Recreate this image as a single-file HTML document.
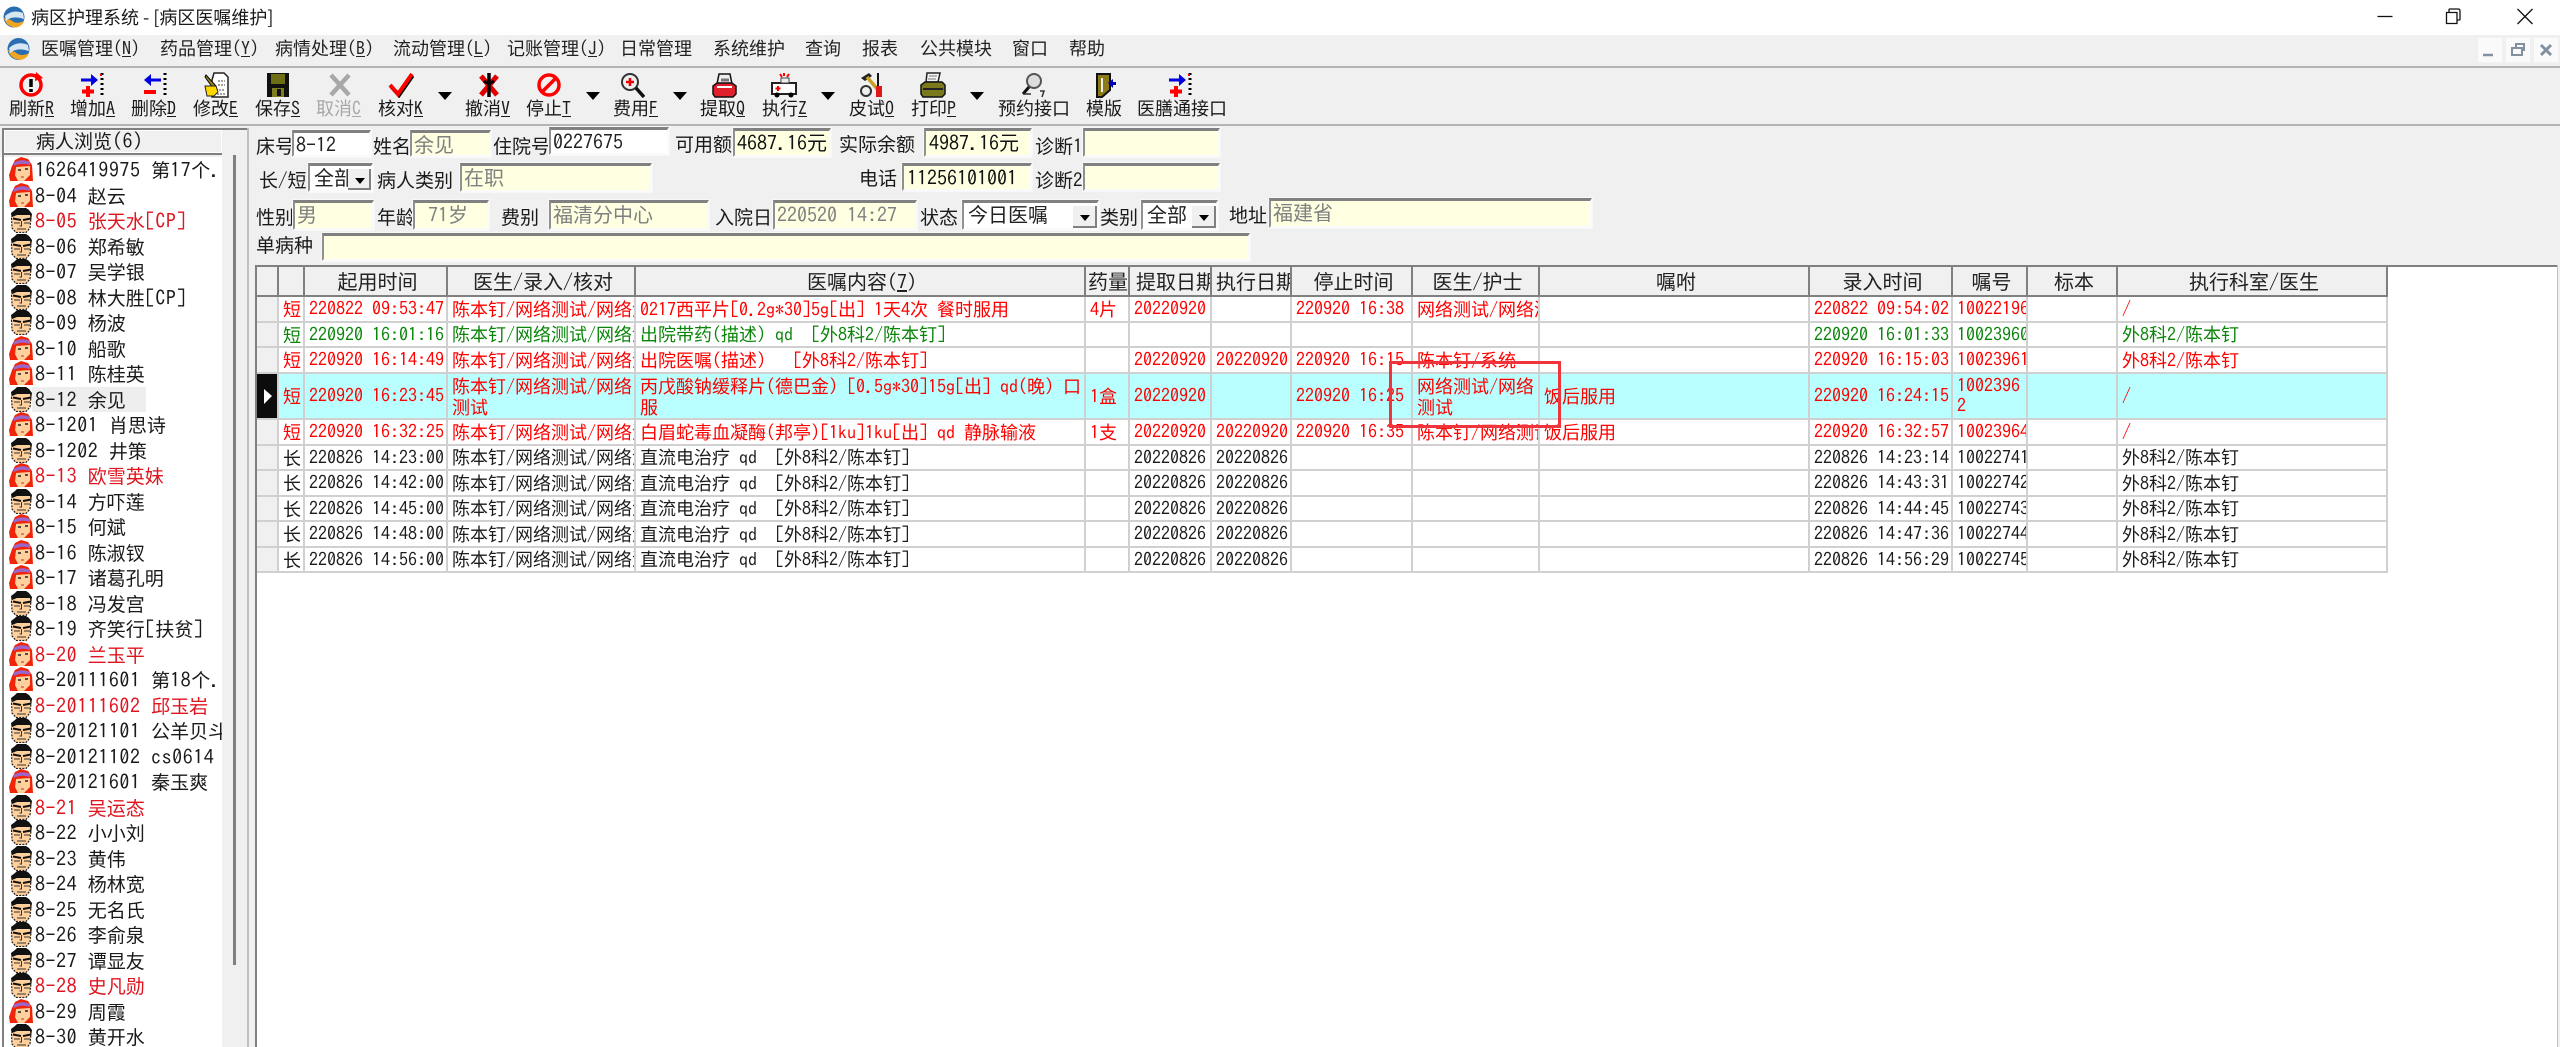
<!DOCTYPE html>
<html lang="zh-CN"><head><meta charset="utf-8"><title>病区护理系统</title>
<style>
html,body{margin:0;padding:0;width:2560px;height:1047px;overflow:hidden;background:#f0f0f0}
body{position:relative;font:18px/24px "WenQuanYi Zen Hei","Noto Sans CJK SC",sans-serif;color:#1a1a1a;filter:blur(.3px)}
b,u,.d{font-family:IPAGothic,"Liberation Mono",monospace;font-weight:normal}
.a{position:absolute;white-space:nowrap}
.t{position:absolute;white-space:nowrap;height:24px;line-height:24px;font-size:19px}
.t b{font-size:19px}
.in{position:absolute;box-sizing:border-box;background:#ffffe1;border-top:3px solid #808080;border-left:2px solid #909090;border-right:2px solid #fafafa;border-bottom:2px solid #fafafa;color:#808080;font-size:20px;line-height:22px;padding-left:2px;white-space:nowrap;overflow:hidden;outline:1px solid #f8f8f8}
.wh{background:#fff;color:#222}.bk{color:#111}
.btn{position:absolute;top:3px;bottom:0;right:0;background:#f0f0f0;border-right:2px solid #808080;border-bottom:2px solid #808080;box-sizing:border-box}
.btn:after{content:"";position:absolute;left:7px;top:9px;border:5px solid transparent;border-top:6px solid #000;border-bottom:0}
.lb{position:absolute;top:96px;height:24px;line-height:24px;white-space:nowrap}
.lb u{text-underline-offset:1px}
.ic{position:absolute;top:72px;width:26px;height:26px}
.ar{position:absolute;top:92px;border:7px solid transparent;border-top:8px solid #000;border-bottom:0}
.m{position:absolute;top:36px;height:24px;line-height:24px;white-space:nowrap;color:#222}
.ln{position:absolute;background:#b4b4b4}
#list{position:absolute;left:0;top:157px;width:222px;height:890px;overflow:hidden;background:#fff;font-size:19px}
#list div{position:relative;height:25.5px;line-height:25.5px;white-space:nowrap;padding-left:35px;color:#1a1a1a}
#list svg{position:absolute;left:9px;top:0;width:24px;height:25px}
#list b{font-size:20px;letter-spacing:.55px}
#list .red{color:#e0141e}
#list .sel:before{content:"";position:absolute;left:32px;top:0;width:114px;height:25.5px;background:#eee;z-index:0}
#list .sel span{position:relative}
table{position:absolute;left:257px;top:267px;border-collapse:separate;border-spacing:0;table-layout:fixed;width:2131px;background:#fff}
td,th{box-sizing:border-box;padding:0 0 0 4px;overflow:hidden;white-space:nowrap;border-right:2px solid #d0d0d0;border-bottom:2px solid #d0d0d0;line-height:20px;font-weight:normal;font-size:18px}
th{height:30px;background:#f0f0f0;font-size:20px;border-right-color:#808080;border-bottom-color:#808080;color:#222}
th.c{text-align:left;padding-left:6px}
tr.x td{height:26px}tr.y td{height:25px}
tr.r td{color:#f00}tr.g td{color:#0a850a}tr.k td{color:#1c1c1c}
tr.s td{height:46px;background:#b9ffff;white-space:normal;word-break:break-all}
td.i{background:#f0f0f0!important;padding:0}
tr.s td.i{background:#0c0c0c!important;position:relative}
</style></head><body>
<svg width="0" height="0" style="position:absolute"><defs>
<symbol id="man" viewBox="0 0 24 25">
<path d="M3 13 L2 5 L6 2 L8 0 L17 0 L20 2 L23 6 L22 13Z" fill="#111"/>
<path d="M3 9 L8 7 L21 7 L22 13 L21 20 L17 24.500 L7 24.500 L3 20Z" fill="#ffcf9c"/>
<path d="M2.500 10 L3 20 L7 24.500 L17 24.500 L21 20 L22 10" fill="none" stroke="#222" stroke-width="1.200" stroke-dasharray="2 1.200"/>
<path d="M4 10.500l8 1.500M14 12l8-1.500" stroke="#111" stroke-width="2"/>
<path d="M5 15h6M15 15h6M12.500 13v5h-2M8 21h9" stroke="#333" stroke-width="1" fill="none"/>
</symbol>
<symbol id="girl" viewBox="0 0 24 25">
<path d="M1 24 L0 18 L3 9 L6 3 L12 0 L19 2 L23 8 L24 24 L19 24 L5 24Z" fill="#f02408"/>
<path d="M4.500 6 Q12 1 21 5 L21 8 Q12 5 5 9Z" fill="#9a66cc"/>
<path d="M7 10 L21 9 L21 18 L15 24 L9 24 L6 18Z" fill="#ffcf9c"/>
<path d="M9 13h3M16 12h3" stroke="#222" stroke-width="1.600"/><path d="M12 20h3" stroke="#b33" stroke-width="1"/>
<path d="M3 10 L7 9 L6 18 L3 23 Z" fill="#f02408"/>
</symbol>
<symbol id="add" viewBox="0 0 26 26">
<path d="M1 8h12" stroke="#0000e0" stroke-width="3"/><path d="M11 2l7 6-7 6z" fill="#0000e0"/>
<path d="M22 1v2M22 6v2M22 11v2M22 16v2M22 21v2" stroke="#000" stroke-width="3"/><path d="M20 3h2" stroke="#f00" stroke-width="2"/>
<path d="M8 14v11M2 19.500h12" stroke="#f00" stroke-width="4"/>
</symbol>
</defs></svg>

<!-- title bar -->
<div class="a" style="left:0;top:0;width:2560px;height:35px;background:#fff"></div>
<svg class="a" style="left:3px;top:6px" width="22" height="22" viewBox="0 0 22 22"><circle cx="11" cy="11" r="10.500" fill="#2a6db0"/><path d="M1 12 Q3 20 12 21.500 Q19 21 21 15 Q13 19 8 14Z" fill="#f2a51e"/><path d="M3 15 Q9 9 21 13 L20 7 Q10 3 2 10Z" fill="#d8e6f2"/></svg>
<div class="t" style="left:31px;top:5px;font-family:'Noto Sans CJK SC',sans-serif;font-size:18px">病区护理系统 - [病区医嘱维护]</div>
<svg class="a" style="left:2370px;top:5px" width="175" height="24" viewBox="0 0 175 24" fill="none" stroke="#111" stroke-width="1.300"><path d="M7.500 11.500h15"/><path d="M76.500 7.500h10.500v11h-10.500z"/><path d="M79 7.500v-2.500q0-1 1-1h8q2 0 2 2v8q0 1-1 1h-2"/><path d="M147.500 4l15 15M162.500 4l-15 15"/></svg>

<!-- menu bar -->
<svg class="a" style="left:7px;top:37px" width="23" height="24" viewBox="0 0 22 22"><circle cx="11" cy="11" r="10.500" fill="#2a6db0"/><path d="M1 12 Q3 20 12 21.500 Q19 21 21 15 Q13 19 8 14Z" fill="#f2a51e"/><path d="M3 15 Q9 9 21 13 L20 7 Q10 3 2 10Z" fill="#d8e6f2"/></svg>
<div class="m" style="left:41px">医嘱管理<b>(<u>N</u>)</b></div>
<div class="m" style="left:160px">药品管理<b>(<u>Y</u>)</b></div>
<div class="m" style="left:275px">病情处理<b>(<u>B</u>)</b></div>
<div class="m" style="left:393px">流动管理<b>(<u>L</u>)</b></div>
<div class="m" style="left:507px">记账管理<b>(<u>J</u>)</b></div>
<div class="m" style="left:620px">日常管理</div>
<div class="m" style="left:713px">系统维护</div>
<div class="m" style="left:805px">查询</div>
<div class="m" style="left:862px">报表</div>
<div class="m" style="left:920px">公共模块</div>
<div class="m" style="left:1012px">窗口</div>
<div class="m" style="left:1069px">帮助</div>
<div class="a" style="left:2478px;top:38px;width:24px;height:24px;background:#fafafa"></div>
<div class="a" style="left:2506px;top:38px;width:24px;height:24px;background:#fafafa"></div>
<div class="a" style="left:2534px;top:38px;width:24px;height:24px;background:#fafafa"></div>
<svg class="a" style="left:2478px;top:38px" width="80" height="24" viewBox="0 0 80 24" fill="none" stroke="#8290a0" stroke-width="2.500"><path d="M5 17h10"/><path d="M34 10h10v7h-10z M38 10v-4h8v7" stroke-width="2"/><path d="M63 7l10 10M73 7l-10 10" stroke-width="3"/></svg>
<div class="ln" style="left:0;top:66px;width:2560px;height:2px"></div>

<!-- toolbar icons -->
<svg class="ic" style="left:18px" viewBox="0 0 26 26"><circle cx="13" cy="13" r="10" fill="none" stroke="#f00" stroke-width="3.500"/><path d="M18 0l7 6-8 3z" fill="#f00"/><path d="M13 7v8M13 17v3" stroke="#000" stroke-width="3.500"/></svg>
<svg class="ic" style="left:80px"><use href="#add"/></svg>
<svg class="ic" style="left:142px" viewBox="0 0 26 26"><path d="M7 8h12" stroke="#0000e0" stroke-width="3"/><path d="M9 2l-7 6 7 6z" fill="#0000e0"/><path d="M23 1v2M23 6v2M23 11v2M23 16v2M23 21v2" stroke="#000" stroke-width="3"/><path d="M2 20h12" stroke="#f00" stroke-width="4"/></svg>
<svg class="ic" style="left:203px" viewBox="0 0 26 26"><path d="M11 1h10l4 4v20H9V8z" fill="#fff" stroke="#222" stroke-width="1.500"/><path d="M15 9h7M15 13h7M13 18h9M14 22h8" stroke="#444" stroke-dasharray="2 1"/><path d="M3 3l10 11-3 2L2 5z" fill="#998a20" stroke="#000"/><path d="M2 14h11l2 6-4 4H4z" fill="#ffd800" stroke="#222"/></svg>
<svg class="ic" style="left:265px" viewBox="0 0 26 26"><path d="M2 1h22v24H2z" fill="#111"/><path d="M6 2h14v10H6z" fill="#6e6e14"/><path d="M7 16h12v9H7z" fill="#7e7e20"/><path d="M12 17h4v7h-4z" fill="#111"/></svg>
<svg class="ic" style="left:327px" viewBox="0 0 26 26"><path d="M4 3l18 20M22 3L4 23" stroke="#a8a8a8" stroke-width="4.500"/></svg>
<svg class="ic" style="left:388px" viewBox="0 0 26 26"><path d="M2 14l8 9L24 3" fill="none" stroke="#000" stroke-width="3" transform="translate(1 1)"/><path d="M2 13l8 9L24 2" fill="none" stroke="#f00" stroke-width="4"/></svg>
<div class="ar" style="left:438px"></div>
<svg class="ic" style="left:476px" viewBox="0 0 26 26"><path d="M5 4l16 19M21 4L5 23" stroke="#e00000" stroke-width="5"/><path d="M13 1v24" stroke="#000" stroke-width="3.500"/><path d="M8 9q5 4 10 0" stroke="#000" stroke-width="3" fill="none"/></svg>
<svg class="ic" style="left:536px" viewBox="0 0 26 26"><circle cx="13" cy="13" r="10" fill="none" stroke="#f00" stroke-width="3.500"/><path d="M6 20L20 6" stroke="#f00" stroke-width="3.500"/></svg>
<div class="ar" style="left:586px"></div>
<svg class="ic" style="left:619px" viewBox="0 0 26 26"><circle cx="11" cy="10" r="8" fill="#eee" stroke="#333" stroke-width="2"/><path d="M11 6v8M7 10h8" stroke="#e00" stroke-width="2.500"/><path d="M17 16l8 9" stroke="#111" stroke-width="3.500"/></svg>
<div class="ar" style="left:673px"></div>
<svg class="ic" style="left:711px" viewBox="0 0 26 26"><path d="M8 2h11l2 10H6z" fill="#eee" stroke="#111" stroke-width="1.500"/><path d="M10 8h8" stroke="#777" stroke-width="3"/><path d="M2 14l4-3h15l4 3v8l-3 3H4l-2-3z" fill="#e0202a" stroke="#111" stroke-width="1.500"/><path d="M6 15h15" stroke="#fff" stroke-width="2"/></svg>
<svg class="ic" style="left:771px" viewBox="0 0 26 26"><path d="M1 11h24v11h-24z" fill="#fff" stroke="#222" stroke-width="2"/><path d="M10 6h8v5h-8z" fill="#eee" stroke="#444"/><path d="M13 1v3M9 2l2 3M18 2l-2 3" stroke="#f00" stroke-width="2"/><path d="M7 14v5M4.500 16.500h5" stroke="#e00" stroke-width="2"/><circle cx="6" cy="23" r="2.500"/><circle cx="20" cy="23" r="2.500"/></svg>
<div class="ar" style="left:821px"></div>
<svg class="ic" style="left:858px" viewBox="0 0 26 26"><path d="M3 6l8-5 3 3-7 5z" fill="#222"/><path d="M9 5l11 13" stroke="#c8a020" stroke-width="3.500"/><path d="M20 1v14" stroke="#111" stroke-width="2"/><path d="M18 14h6v11h-6z" fill="#e01818"/><circle cx="8" cy="19" r="5" fill="none" stroke="#333" stroke-width="2"/></svg>
<svg class="ic" style="left:920px" viewBox="0 0 26 26"><path d="M7 1h13l-2 9H6z" fill="#f4f4f4" stroke="#222" stroke-width="1.500"/><path d="M9 4h8M8 7h8" stroke="#777"/><path d="M1 13l4-3h17l3 3v9l-3 3H3l-2-3z" fill="#7a7a1c" stroke="#111" stroke-width="1.500"/><path d="M3 17h20" stroke="#222" stroke-width="2"/></svg>
<div class="ar" style="left:970px"></div>
<svg class="ic" style="left:1020px" viewBox="0 0 26 26"><circle cx="14" cy="9" r="7" fill="#ddd" stroke="#555" stroke-width="2"/><path d="M9 15L3 22" stroke="#111" stroke-width="3"/><path d="M3 22h8M20 19h4l-2 6" stroke="#333" stroke-width="1.500" fill="none"/></svg>
<svg class="ic" style="left:1092px" viewBox="0 0 26 26"><path d="M5 2h13v16l-8 7H5z" fill="#8a7a18" stroke="#111" stroke-width="2"/><path d="M10 6v14" stroke="#eee" stroke-width="2"/><path d="M16 11l5-4v3h3v3h-3v3z" fill="#0000b0"/></svg>
<svg class="ic" style="left:1168px"><use href="#add"/></svg>

<!-- toolbar labels -->
<div class="lb" style="left:9px">刷新<u>R</u></div>
<div class="lb" style="left:70px">增加<u>A</u></div>
<div class="lb" style="left:131px">删除<u>D</u></div>
<div class="lb" style="left:193px">修改<u>E</u></div>
<div class="lb" style="left:255px">保存<u>S</u></div>
<div class="lb" style="left:316px;color:#a8a8a8">取消<u>C</u></div>
<div class="lb" style="left:378px">核对<u>K</u></div>
<div class="lb" style="left:465px">撤消<u>V</u></div>
<div class="lb" style="left:526px">停止<u>T</u></div>
<div class="lb" style="left:613px">费用<u>F</u></div>
<div class="lb" style="left:700px">提取<u>Q</u></div>
<div class="lb" style="left:762px">执行<u>Z</u></div>
<div class="lb" style="left:849px">皮试<u>O</u></div>
<div class="lb" style="left:911px">打印<u>P</u></div>
<div class="lb" style="left:998px">预约接口</div>
<div class="lb" style="left:1086px">模版</div>
<div class="lb" style="left:1137px">医膳通接口</div>
<div class="ln" style="left:0;top:124px;width:2560px;height:2px"></div>

<!-- form -->
<div class="t" style="left:256px;top:134px">床号</div>
<div class="in wh" style="left:292px;top:130px;width:79px;height:27px"><b>8-12</b></div>
<div class="t" style="left:373px;top:134px">姓名</div>
<div class="in" style="left:410px;top:130px;width:81px;height:27px">余见</div>
<div class="t" style="left:493px;top:134px">住院号</div>
<div class="in wh" style="left:549px;top:127px;width:120px;height:28px"><b>0227675</b></div>
<div class="t" style="left:675px;top:132px">可用额</div>
<div class="in bk" style="left:733px;top:128px;width:98px;height:29px"><b>4687.16</b>元</div>
<div class="t" style="left:839px;top:132px">实际余额</div>
<div class="in bk" style="left:924px;top:128px;width:108px;height:29px;padding-left:3px"><b>4987.16</b>元</div>
<div class="t" style="left:1035px;top:134px">诊断<b>1</b></div>
<div class="in" style="left:1083px;top:128px;width:137px;height:29px"></div>

<div class="t" style="left:259px;top:168px">长<b>/</b>短</div>
<div class="in wh" style="left:308px;top:163px;width:65px;height:29px;padding-left:4px">全部<span class="btn" style="width:23px"></span></div>
<div class="t" style="left:377px;top:168px">病人类别</div>
<div class="in" style="left:460px;top:163px;width:192px;height:29px">在职</div>
<div class="t" style="left:859px;top:166px">电话</div>
<div class="in bk" style="left:902px;top:163px;width:130px;height:28px;padding-left:3px"><b>11256101001</b></div>
<div class="t" style="left:1035px;top:168px">诊断<b>2</b></div>
<div class="in" style="left:1083px;top:163px;width:137px;height:28px"></div>

<div class="t" style="left:256px;top:205px">性别</div>
<div class="in" style="left:293px;top:200px;width:81px;height:30px">男</div>
<div class="t" style="left:377px;top:205px">年龄</div>
<div class="in" style="left:413px;top:200px;width:76px;height:30px;padding-left:13px"><b>71</b>岁</div>
<div class="t" style="left:501px;top:205px">费别</div>
<div class="in" style="left:549px;top:200px;width:160px;height:30px">福清分中心</div>
<div class="t" style="left:715px;top:205px">入院日</div>
<div class="in" style="left:773px;top:200px;width:144px;height:30px"><b>220520 14:27</b></div>
<div class="t" style="left:920px;top:205px">状态</div>
<div class="in wh" style="left:962px;top:200px;width:137px;height:30px;padding-left:4px">今日医嘱<span class="btn" style="width:24px"></span></div>
<div class="t" style="left:1100px;top:205px">类别</div>
<div class="in wh" style="left:1141px;top:200px;width:77px;height:30px;padding-left:4px">全部<span class="btn" style="width:24px"></span></div>
<div class="t" style="left:1229px;top:203px">地址</div>
<div class="in" style="left:1269px;top:198px;width:323px;height:30px">福建省</div>
<div class="t" style="left:256px;top:233px">单病种</div>
<div class="in" style="left:322px;top:233px;width:928px;height:28px"></div>

<!-- left panel -->
<div class="a" style="left:3px;top:128px;width:245px;height:2px;background:#808080"></div>
<div class="a" style="left:247px;top:128px;width:2px;height:919px;background:#c0c0c0"></div>
<div class="a" style="left:4px;top:130px;width:218px;height:25px;background:#fff"></div>
<div class="a" style="left:5px;top:131px;width:216px;height:21px;background:#f0f0f0"></div>
<div class="a" style="left:4px;top:153px;width:218px;height:2px;background:#808080"></div>
<div class="t" style="left:36px;top:130px;height:22px;line-height:22px">病人浏览<b style="font-size:20px;letter-spacing:.5px">(6)</b></div>
<div id="list">
<div><svg><use href="#girl"/></svg><b>1626419975 </b>第<b>17</b>个<b>.</b></div>
<div><svg><use href="#girl"/></svg><b>8-04 </b>赵云</div>
<div class="red"><svg><use href="#man"/></svg><b>8-05 </b>张天水<b>[CP]</b></div>
<div><svg><use href="#man"/></svg><b>8-06 </b>郑希敏</div>
<div><svg><use href="#man"/></svg><b>8-07 </b>吴学银</div>
<div><svg><use href="#man"/></svg><b>8-08 </b>林大胜<b>[CP]</b></div>
<div><svg><use href="#man"/></svg><b>8-09 </b>杨波</div>
<div><svg><use href="#girl"/></svg><b>8-10 </b>船歌</div>
<div><svg><use href="#girl"/></svg><b>8-11 </b>陈桂英</div>
<div class="sel"><svg><use href="#man"/></svg><span><b>8-12 </b>余见</span></div>
<div><svg><use href="#girl"/></svg><b>8-1201 </b>肖思诗</div>
<div><svg><use href="#man"/></svg><b>8-1202 </b>井策</div>
<div class="red"><svg><use href="#girl"/></svg><b>8-13 </b>欧雪英妹</div>
<div><svg><use href="#man"/></svg><b>8-14 </b>方吓莲</div>
<div><svg><use href="#girl"/></svg><b>8-15 </b>何斌</div>
<div><svg><use href="#girl"/></svg><b>8-16 </b>陈淑钗</div>
<div><svg><use href="#girl"/></svg><b>8-17 </b>诸葛孔明</div>
<div><svg><use href="#man"/></svg><b>8-18 </b>冯发宫</div>
<div><svg><use href="#man"/></svg><b>8-19 </b>齐笑行<b>[</b>扶贫<b>]</b></div>
<div class="red"><svg><use href="#girl"/></svg><b>8-20 </b>兰玉平</div>
<div><svg><use href="#girl"/></svg><b>8-20111601 </b>第<b>18</b>个<b>.</b></div>
<div class="red"><svg><use href="#man"/></svg><b>8-20111602 </b>邱玉岩</div>
<div><svg><use href="#man"/></svg><b>8-20121101 </b>公羊贝斗</div>
<div><svg><use href="#man"/></svg><b>8-20121102 cs0614</b></div>
<div><svg><use href="#girl"/></svg><b>8-20121601 </b>秦玉爽</div>
<div class="red"><svg><use href="#man"/></svg><b>8-21 </b>吴运态</div>
<div><svg><use href="#man"/></svg><b>8-22 </b>小小刘</div>
<div><svg><use href="#man"/></svg><b>8-23 </b>黄伟</div>
<div><svg><use href="#man"/></svg><b>8-24 </b>杨林宽</div>
<div><svg><use href="#man"/></svg><b>8-25 </b>无名氏</div>
<div><svg><use href="#man"/></svg><b>8-26 </b>李俞泉</div>
<div><svg><use href="#man"/></svg><b>8-27 </b>谭显友</div>
<div class="red"><svg><use href="#man"/></svg><b>8-28 </b>史凡勋</div>
<div><svg><use href="#girl"/></svg><b>8-29 </b>周霞</div>
<div><svg><use href="#man"/></svg><b>8-30 </b>黄开水</div>
</div>
<div class="a" style="left:2px;top:128px;width:2px;height:919px;background:#808080"></div>
<div class="a" style="left:233px;top:155px;width:3px;height:810px;background:#808080"></div>

<!-- grid area -->
<div class="a" style="left:256px;top:265px;width:2302px;height:782px;background:#fff"></div>
<div class="a" style="left:256px;top:265px;width:2302px;height:2px;background:#808080"></div>
<div class="a" style="left:255px;top:265px;width:2px;height:782px;background:#808080"></div>
<div class="a" style="left:2557px;top:265px;width:1px;height:782px;background:#c0c0c0"></div>
<table>
<colgroup><col style="width:22px"><col style="width:26px"><col style="width:143px"><col style="width:188px"><col style="width:450px"><col style="width:44px"><col style="width:82px"><col style="width:80px"><col style="width:121px"><col style="width:127px"><col style="width:270px"><col style="width:143px"><col style="width:75px"><col style="width:90px"><col style="width:270px"></colgroup>
<tr><th></th><th></th><th>起用时间</th><th>医生<b>/</b>录入<b>/</b>核对</th><th>医嘱内容<b>(<u>7</u>)</b></th><th class="c" style="padding:0 0 0 2px">药量</th><th class="c">提取日期</th><th class="c" style="padding-left:4px">执行日期</th><th>停止时间</th><th>医生<b>/</b>护士</th><th>嘱咐</th><th>录入时间</th><th>嘱号</th><th>标本</th><th>执行科室<b>/</b>医生</th></tr>
<tr class="x r"><td class="i"></td><td>短</td><td class="d">220822 09:53:47</td><td>陈本钉<b>/</b>网络测试<b>/</b>网络测试</td><td><b>0217</b>西平片<b>[0.2g*30]5g[</b>出<b>] 1</b>天<b>4</b>次<b> </b>餐时服用</td><td><b>4</b>片</td><td class="d">20220920</td><td></td><td class="d">220920 16:38</td><td>网络测试<b>/</b>网络测试</td><td></td><td class="d">220822 09:54:02</td><td class="d">10022196</td><td></td><td class="d">/</td></tr>
<tr class="y g"><td class="i"></td><td>短</td><td class="d">220920 16:01:16</td><td>陈本钉<b>/</b>网络测试<b>/</b>网络测试</td><td>出院带药<b>(</b>描述<b>) qd&nbsp;&nbsp;[</b>外<b>8</b>科<b>2/</b>陈本钉<b>]</b></td><td></td><td></td><td></td><td></td><td></td><td></td><td class="d">220920 16:01:33</td><td class="d">10023960</td><td></td><td>外<b>8</b>科<b>2/</b>陈本钉</td></tr>
<tr class="x r"><td class="i"></td><td>短</td><td class="d">220920 16:14:49</td><td>陈本钉<b>/</b>网络测试<b>/</b>网络测试</td><td>出院医嘱<b>(</b>描述<b>)&nbsp;&nbsp;&nbsp;[</b>外<b>8</b>科<b>2/</b>陈本钉<b>]</b></td><td></td><td class="d">20220920</td><td class="d">20220920</td><td class="d">220920 16:15</td><td>陈本钉<b>/</b>系统</td><td></td><td class="d">220920 16:15:03</td><td class="d">10023961</td><td></td><td>外<b>8</b>科<b>2/</b>陈本钉</td></tr>
<tr class="s r"><td class="i"><svg width="20" height="44" style="display:block"><path d="M7 15l8 7-8 8z" fill="#fff"/></svg></td><td>短</td><td class="d">220920 16:23:45</td><td>陈本钉<b>/</b>网络测试<b>/</b>网络测试</td><td>丙戊酸钠缓释片<b>(</b>德巴金<b>) [0.5g*30]15g[</b>出<b>] qd(</b>晚<b>) </b>口服</td><td><b>1</b>盒</td><td class="d">20220920</td><td></td><td class="d">220920 16:25</td><td>网络测试<b>/</b>网络测试</td><td>饭后服用</td><td class="d">220920 16:24:15</td><td class="d">10023962</td><td></td><td class="d">/</td></tr>
<tr class="x r"><td class="i"></td><td>短</td><td class="d">220920 16:32:25</td><td>陈本钉<b>/</b>网络测试<b>/</b>网络测试</td><td>白眉蛇毒血凝酶<b>(</b>邦亭<b>)[1ku]1ku[</b>出<b>] qd </b>静脉输液</td><td><b>1</b>支</td><td class="d">20220920</td><td class="d">20220920</td><td class="d">220920 16:35</td><td>陈本钉<b>/</b>网络测试<b>/</b>网络测试</td><td>饭后服用</td><td class="d">220920 16:32:57</td><td class="d">10023964</td><td></td><td class="d">/</td></tr>
<tr class="y k"><td class="i"></td><td>长</td><td class="d">220826 14:23:00</td><td>陈本钉<b>/</b>网络测试<b>/</b>网络测试</td><td>直流电治疗<b> qd&nbsp;&nbsp;[</b>外<b>8</b>科<b>2/</b>陈本钉<b>]</b></td><td></td><td class="d">20220826</td><td class="d">20220826</td><td></td><td></td><td></td><td class="d">220826 14:23:14</td><td class="d">10022741</td><td></td><td>外<b>8</b>科<b>2/</b>陈本钉</td></tr>
<tr class="x k"><td class="i"></td><td>长</td><td class="d">220826 14:42:00</td><td>陈本钉<b>/</b>网络测试<b>/</b>网络测试</td><td>直流电治疗<b> qd&nbsp;&nbsp;[</b>外<b>8</b>科<b>2/</b>陈本钉<b>]</b></td><td></td><td class="d">20220826</td><td class="d">20220826</td><td></td><td></td><td></td><td class="d">220826 14:43:31</td><td class="d">10022742</td><td></td><td>外<b>8</b>科<b>2/</b>陈本钉</td></tr>
<tr class="y k"><td class="i"></td><td>长</td><td class="d">220826 14:45:00</td><td>陈本钉<b>/</b>网络测试<b>/</b>网络测试</td><td>直流电治疗<b> qd&nbsp;&nbsp;[</b>外<b>8</b>科<b>2/</b>陈本钉<b>]</b></td><td></td><td class="d">20220826</td><td class="d">20220826</td><td></td><td></td><td></td><td class="d">220826 14:44:45</td><td class="d">10022743</td><td></td><td>外<b>8</b>科<b>2/</b>陈本钉</td></tr>
<tr class="x k"><td class="i"></td><td>长</td><td class="d">220826 14:48:00</td><td>陈本钉<b>/</b>网络测试<b>/</b>网络测试</td><td>直流电治疗<b> qd&nbsp;&nbsp;[</b>外<b>8</b>科<b>2/</b>陈本钉<b>]</b></td><td></td><td class="d">20220826</td><td class="d">20220826</td><td></td><td></td><td></td><td class="d">220826 14:47:36</td><td class="d">10022744</td><td></td><td>外<b>8</b>科<b>2/</b>陈本钉</td></tr>
<tr class="y k"><td class="i"></td><td>长</td><td class="d">220826 14:56:00</td><td>陈本钉<b>/</b>网络测试<b>/</b>网络测试</td><td>直流电治疗<b> qd&nbsp;&nbsp;[</b>外<b>8</b>科<b>2/</b>陈本钉<b>]</b></td><td></td><td class="d">20220826</td><td class="d">20220826</td><td></td><td></td><td></td><td class="d">220826 14:56:29</td><td class="d">10022745</td><td></td><td>外<b>8</b>科<b>2/</b>陈本钉</td></tr>
</table>
<!-- annotation -->
<div class="a" style="left:1389px;top:361px;width:172px;height:67px;box-sizing:border-box;border:3px solid #f0343c"></div>
</body></html>
